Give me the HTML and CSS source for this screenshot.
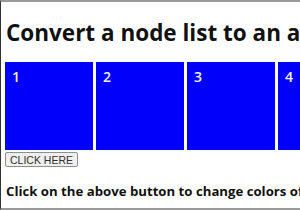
FILE: index.html
```html
<!DOCTYPE html>
<html>
<head>
<meta charset="utf-8">
<link rel="stylesheet" href="styles.css">
</head>
<body>
<div class="frame">
  <h1 class="title">Convert a node list to an array</h1>
  <div class="boxes">
    <div class="box">1</div>
    <div class="box">2</div>
    <div class="box">3</div>
    <div class="box">4</div>
  </div>
  <button class="btn">CLICK HERE</button>
  <p class="note">Click on the above button to change colors of the boxes</p>
</div>
</body>
</html>
```

FILE: styles.css
```css
html, body {
  margin: 0;
  padding: 0;
  background: #fff;
  overflow: hidden;
}
.frame {
  width: 300px;
  height: 210px;
  box-sizing: border-box;
  border-top: 2px solid #9a9a9a;
  border-bottom: 2px solid #9a9a9a;
  border-left: 1px solid #333;
  padding: 0 0 0 4px;
  font-family: "Open Sans", "Noto Sans", sans-serif;
  overflow: hidden;
  white-space: nowrap;
}
.title {
  margin: 16px 0 0 1px;
  font-size: 22.5px;
  line-height: 30px;
  font-weight: 700;
  color: #111;
}
.boxes {
  display: flex;
  gap: 3px;
  margin-top: 14px;
}
.box {
  flex: 0 0 88px;
  height: 88px;
  background: #0000fb;
  color: #f0f0ff;
  font-size: 14px;
  font-weight: 600;
  padding: 5px 0 0 7px;
  box-sizing: border-box;
  line-height: 20px;
}
.btn {
  display: block;
  margin-top: 2px;
  height: 15px;
  padding: 0 4px;
  font-family: "Liberation Sans", Arial, sans-serif;
  font-size: 10.5px;
  color: #333;
  background: #efefef;
  border: 1px solid #8f8f8f;
  border-radius: 2px;
  line-height: 12px;
}
.note {
  margin: 14px 0 0 1px;
  font-size: 13.2px;
  font-weight: 700;
  line-height: 20px;
  color: #111;
}
```
